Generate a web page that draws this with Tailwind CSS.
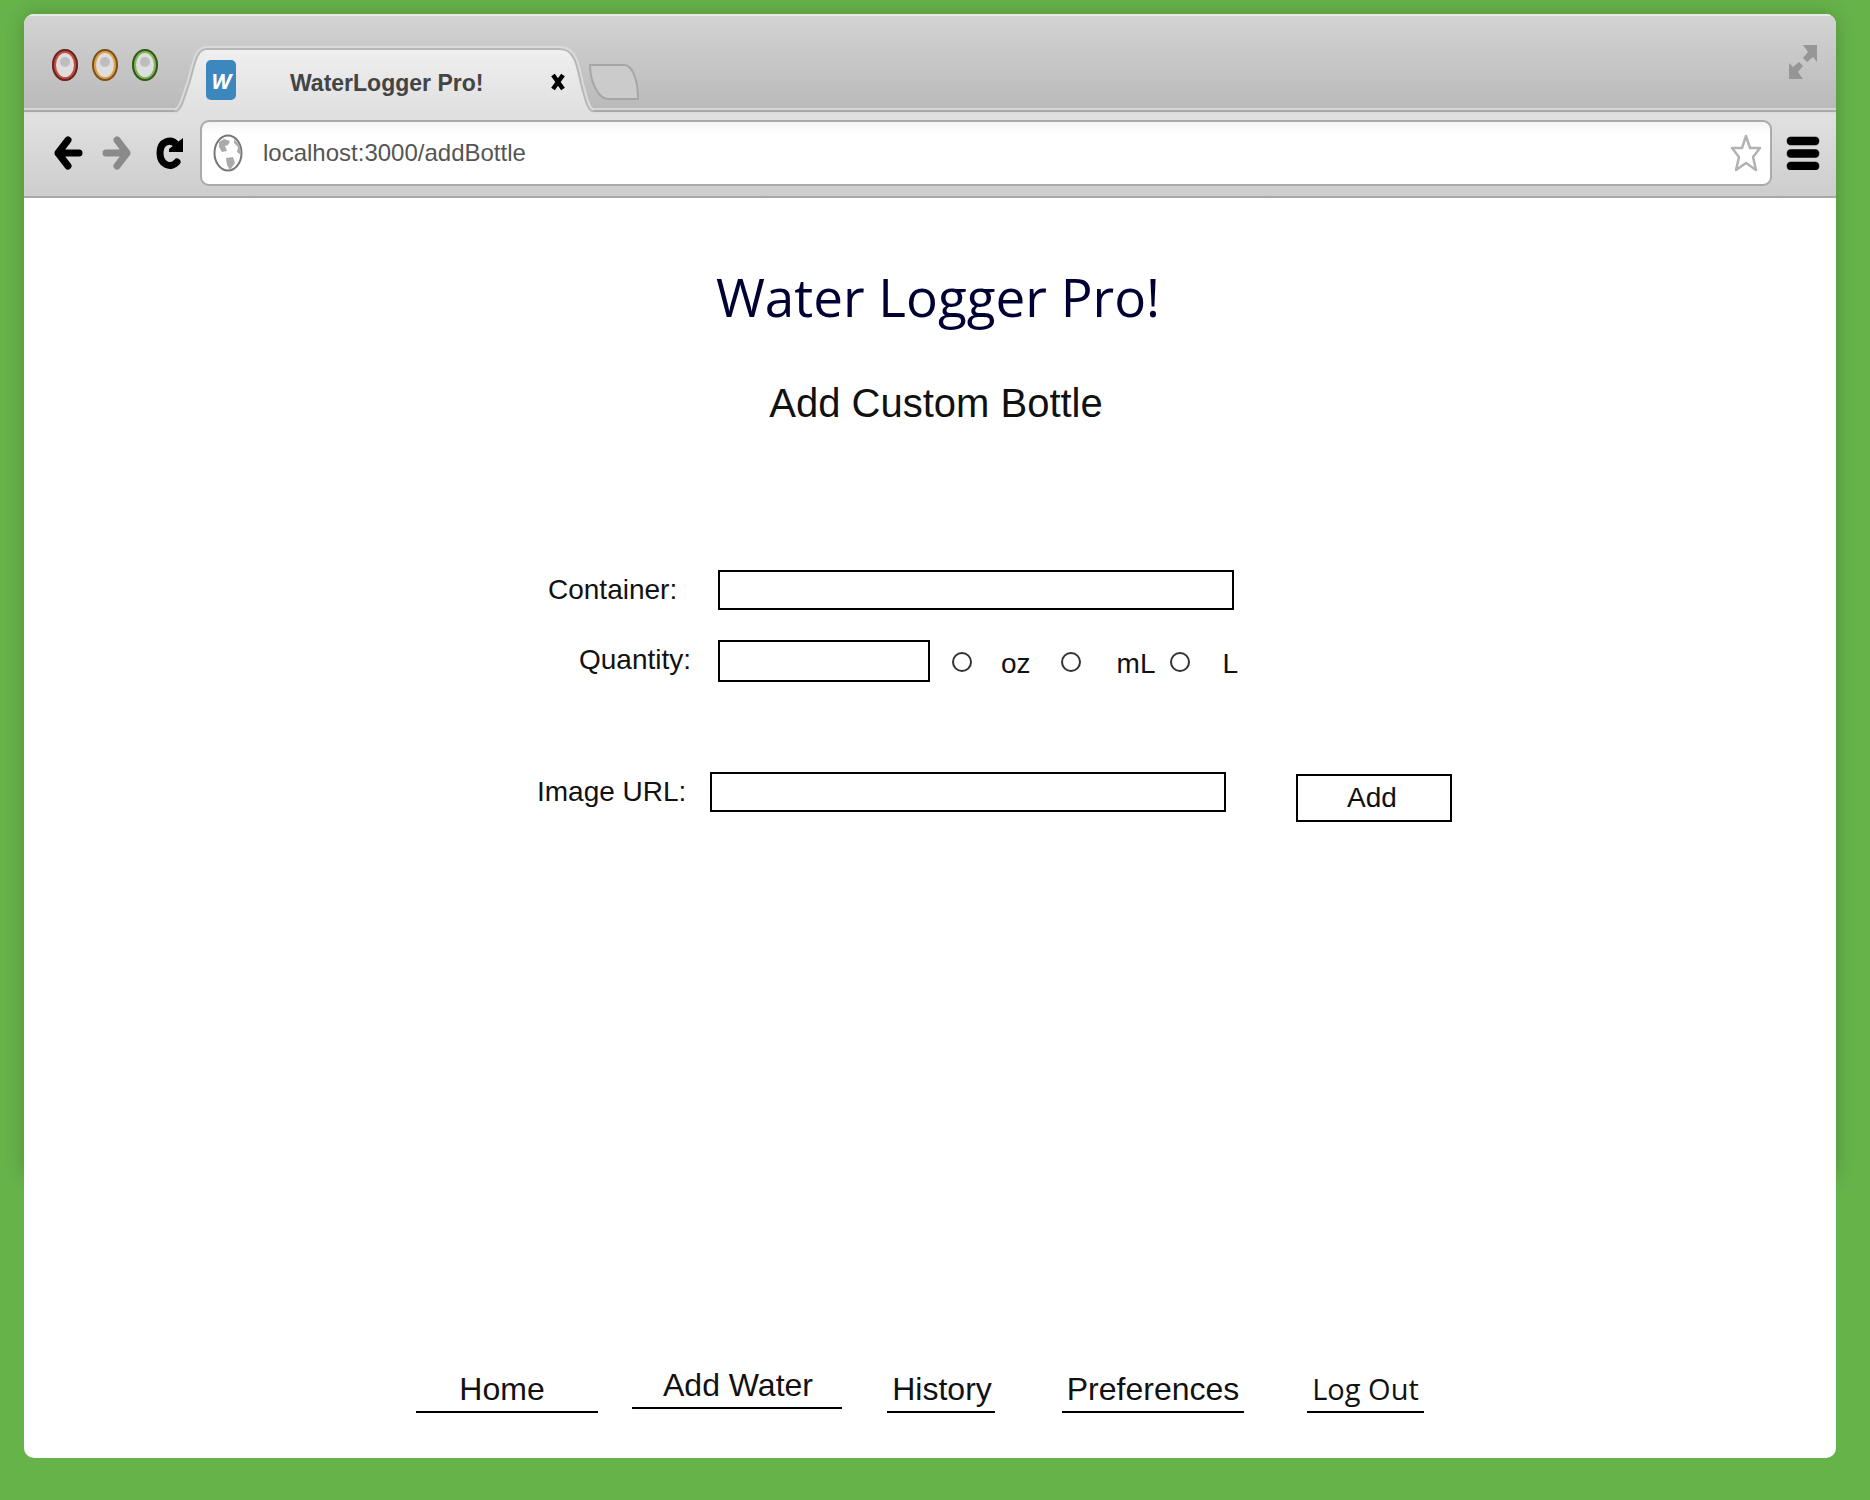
<!DOCTYPE html>
<html lang="en">
<head>
<meta charset="utf-8">
<meta name="viewport" content="width=device-width, initial-scale=1">
<title>WaterLogger Pro!</title>
<script src="https://cdn.jsdelivr.net/npm/@tailwindcss/browser@4"></script>
</head>
<body class="flex min-h-screen flex-col bg-[#66b34a] pt-[14px] pr-[34px] pb-[42px] pl-6 font-['Liberation_Sans',Arial,sans-serif] text-[#111]">
<div class="relative flex flex-1 flex-col">
  <div class="absolute inset-x-0 top-0 bottom-[280px] rounded-xl shadow-[0_0_20px_rgba(0,0,0,0.2)]"></div>
  <div class="relative flex flex-1 flex-col overflow-hidden rounded-[10px] bg-white">

    <!-- Tab strip -->
    <div class="flex h-[100px] items-end bg-[linear-gradient(to_bottom,#e8e8e8_0,#e8e8e8_2px,#d3d3d3_2px,#bababa_94px,#d6d6d6_94px,#d6d6d6_96px,#a9a9a9_96px,#a9a9a9_98px,#dcdcdc_98px)] pl-7">
      <div class="flex gap-[14px] self-start pt-[35px]">
        <button aria-label="Close window"><svg class="block h-8 w-[26px]" viewBox="0 0 26 32"><ellipse cx="13" cy="16" rx="11" ry="14" fill="#dedede" stroke="#cf4a3c" stroke-width="4"/><ellipse cx="13" cy="16" rx="12" ry="15" fill="none" stroke="#5c2a28" stroke-width="2"/><ellipse cx="13" cy="13" rx="5" ry="5" fill="#bdbdbd"/></svg></button>
        <button aria-label="Minimize window"><svg class="block h-8 w-[26px]" viewBox="0 0 26 32"><ellipse cx="13" cy="16" rx="11" ry="14" fill="#dedede" stroke="#e0a040" stroke-width="4"/><ellipse cx="13" cy="16" rx="12" ry="15" fill="none" stroke="#765027" stroke-width="2"/><ellipse cx="13" cy="13" rx="5" ry="5" fill="#bdbdbd"/></svg></button>
        <button aria-label="Zoom window"><svg class="block h-8 w-[26px]" viewBox="0 0 26 32"><ellipse cx="13" cy="16" rx="11" ry="14" fill="#dedede" stroke="#7fb654" stroke-width="4"/><ellipse cx="13" cy="16" rx="12" ry="15" fill="none" stroke="#35561f" stroke-width="2"/><ellipse cx="13" cy="13" rx="5" ry="5" fill="#bdbdbd"/></svg></button>
      </div>
      <div class="relative ml-4 h-[68px] w-[420px]">
        <svg class="absolute inset-0 h-full w-full" viewBox="0 0 420 68">
          <defs><linearGradient id="tab" x1="0" y1="0" x2="0" y2="1"><stop offset="0" stop-color="#efefef"/><stop offset="1" stop-color="#e0e0e0"/></linearGradient></defs>
          <path d="M0 65H3C8 62 10 52 15 38C21 18 22 3 33 3H386C400 3 403 18 407 38C411 52 413 63 418 65H420" fill="none" stroke="#dadada" stroke-width="6"/>
          <path d="M4 68V66C8 62 10 52 15 38C21 18 22 3 33 3H386C400 3 403 18 407 38C411 52 413 63 418 66V68Z" fill="url(#tab)"/>
          <path d="M0 65H3C8 62 10 52 15 38C21 18 22 3 33 3H386C400 3 403 18 407 38C411 52 413 63 418 65H420" fill="none" stroke="#b8b8b8" stroke-width="2"/>
        </svg>
        <div class="relative flex h-full items-center pl-8">
          <div class="flex h-10 w-[30px] items-center justify-center rounded-[5px] bg-[#3c87bd] font-['Open_Sans',sans-serif] text-[22px] leading-none font-bold text-white italic">W</div>
          <span class="ml-[54px] pt-1.5 text-[23px] font-bold text-[#444]">WaterLogger Pro!</span>
          <button class="ml-auto mr-[28px] pt-1" aria-label="Close tab"><svg class="block h-5 w-4" viewBox="0 0 16 20"><path d="M3 3 13 17M13 3 3 17" stroke="#000" stroke-width="4.5"/></svg></button>
        </div>
      </div>
      <button class="-ml-2 self-start pt-[49px]" aria-label="New tab"><svg class="block h-[38px] w-[54px]" viewBox="0 0 54 38"><path d="M4 2H38C47 2 52 18 52 36H22C12 36 4 18 4 2Z" fill="#cbcbcb" stroke="#a6a6a6" stroke-width="2"/></svg></button>
      <button class="mr-[18px] ml-auto self-start pt-[30px]" aria-label="Full screen"><svg class="block h-9 w-[30px]" viewBox="0 0 30 36"><path d="M15 1H29V18L25 13 19 18 15 14 20 8ZM1 19 5 23 11 18 15 22 10 28 15 35H1Z" fill="#969696"/></svg></button>
    </div>

    <!-- Toolbar -->
    <div class="flex h-[84px] items-start border-b-2 border-[#a8a8a8] bg-linear-to-b from-[#e1e1e1] to-[#cdcdcd] pt-1.5 pr-4 pl-7">
      <div class="flex h-[66px] w-[148px] items-center gap-[18px]">
        <button aria-label="Back"><svg class="block h-9 w-8" viewBox="0 0 32 36"><path d="M27 18H6M16 5 6 18 16 31" fill="none" stroke="#000" stroke-width="7" stroke-linecap="round" stroke-linejoin="round"/></svg></button>
        <button aria-label="Forward"><svg class="block h-9 w-8" viewBox="0 0 32 36"><path d="M4 18H25M15 5 25 18 15 31" fill="none" stroke="#8a8a8a" stroke-width="7" stroke-linecap="round" stroke-linejoin="round"/></svg></button>
        <button aria-label="Reload"><svg class="block h-9 w-8" viewBox="0 0 32 36"><path d="M25 10C19 3 8 6 8 18S19 34 25 27" fill="none" stroke="#000" stroke-width="7" stroke-linecap="round"/><path d="M31 3V17H17V14Z" fill="#000"/></svg></button>
      </div>
      <div class="flex h-[66px] flex-1 items-center rounded-[9px] border-2 border-[#aaa] bg-linear-to-b from-[#f5f5f5] to-white to-20% pr-2 pl-[11px]">
        <svg class="h-[38px] w-[30px]" viewBox="0 0 30 38"><ellipse cx="15" cy="19" rx="13.5" ry="17.5" fill="#fff" stroke="#777" stroke-width="2"/><path d="M6 8 11 5 17 7 15 11 12 12 14 17 9 18 6 13ZM13 24 20 23 22 29 17 36 14 31ZM21 5 27 12 28 21 24 18 25 13 21 9Z" fill="#aaa"/></svg>
        <input type="text" aria-label="Address" value="localhost:3000/addBottle" class="ml-5 min-w-0 flex-1 bg-transparent text-2xl text-[#555] outline-none">
        <button aria-label="Bookmark"><svg class="block h-10 w-8" viewBox="0 0 32 40"><path d="M16 3 20 15H30L23 24 26 37 16 30 6 37 9 24 2 15H12Z" fill="#fff" stroke="#b2b2b2" stroke-width="2.5" stroke-linejoin="round"/></svg></button>
      </div>
      <button class="ml-3.5 self-start pt-4" aria-label="Menu"><svg class="block h-[34px] w-[34px]" viewBox="0 0 34 34"><path d="M5 5H29M5 17.500H29M5 30H29" stroke="#666" stroke-width="9" stroke-linecap="round"/><path d="M5 5H29M5 17.500H29M5 30H29" stroke="#000" stroke-width="8" stroke-linecap="round"/></svg></button>
    </div>

    <!-- Page -->
    <main class="flex flex-1 flex-col items-center pt-[69px] pb-[45px]">
      <h1 class="pl-4 font-['Open_Sans',sans-serif] text-[53px] leading-[60px] text-[#000033]">Water Logger Pro!</h1>
      <h2 class="mt-[52px] pl-3 text-[40px] leading-[48px]">Add Custom Bottle</h2>

      <form class="mt-[143px] pl-32 text-[28px] leading-8">
        <div class="flex items-center">
          <label for="container" class="w-[182px] pl-3">Container:</label>
          <input id="container" type="text" class="h-10 w-[516px] border-2 border-black px-2">
        </div>
        <div class="mt-[30px] flex items-start">
          <label for="quantity" class="w-[182px] pt-1 pl-[43px]">Quantity:</label>
          <input id="quantity" type="text" class="h-[42px] w-[212px] border-2 border-black px-2">
          <div class="flex items-start self-end leading-9">
            <input id="oz" type="radio" name="unit" class="mt-1.5 ml-[22px] size-5 appearance-none rounded-full border-2 border-[#333] checked:bg-black">
            <label for="oz" class="pl-[29px]">oz</label>
            <input id="ml" type="radio" name="unit" class="mt-1.5 ml-[30px] size-5 appearance-none rounded-full border-2 border-[#333] checked:bg-black">
            <label for="ml" class="pl-9">mL</label>
            <input id="l" type="radio" name="unit" class="mt-1.5 ml-[15px] size-5 appearance-none rounded-full border-2 border-[#333] checked:bg-black">
            <label for="l" class="pl-8">L</label>
          </div>
        </div>
        <div class="mt-[90px] flex items-start">
          <label for="image" class="w-[174px] pt-1 pl-px">Image URL:</label>
          <input id="image" type="text" class="h-10 w-[516px] border-2 border-black px-2">
          <button type="button" class="mt-0.5 ml-[70px] h-12 w-[156px] border-2 border-black pr-1">Add</button>
        </div>
      </form>

      <nav class="mt-auto flex items-end pr-5 text-center text-[32px] leading-9">
        <a href="#" class="w-[182px] border-b-2 border-black pr-2.5 pb-1">Home</a>
        <a href="#" class="mb-1 ml-[34px] w-[210px] border-b-2 border-black pb-1 pl-0.5">Add Water</a>
        <a href="#" class="ml-[45px] w-[108px] border-b-2 border-black pb-1 pl-0.5">History</a>
        <a href="#" class="ml-[67px] w-[182px] border-b-2 border-black pb-1">Preferences</a>
        <a href="#" class="ml-[63px] w-[117px] border-b-2 border-black pb-1 font-['Open_Sans',sans-serif] text-[29px] leading-9 font-medium">Log Out</a>
      </nav>
    </main>
  </div>
</div>
</body>
</html>
